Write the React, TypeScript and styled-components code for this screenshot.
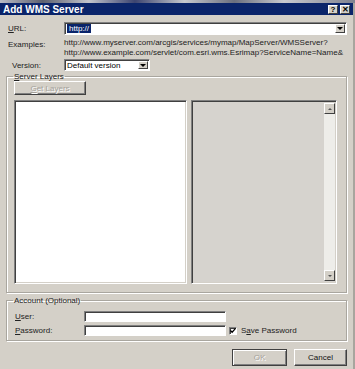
import styled, { createGlobalStyle } from 'styled-components';

const GlobalStyle = createGlobalStyle`
  html, body {
    margin: 0;
    padding: 0;
    background: #8a8e9c;
    font-family: "Liberation Sans", Arial, sans-serif;
  }
  * { box-sizing: border-box; }
`;

const Backdrop = styled.div`
  width: 355px;
  height: 3px;
  background: linear-gradient(90deg, #b9bcc6 0%, #5d6170 12%, #c3c5cc 25%, #3c4470 38%, #c7c9ce 52%, #6b6f7e 66%, #c9cacf 80%, #7f8290 100%);
`;

const Window = styled.div`
  width: 355px;
  height: 366px;
  background: #d4d0c8;
  display: flex;
  flex-direction: column;
  border-right: 2px solid #a8a59e;
`;

const TitleBar = styled.div`
  height: 12px;
  background: #0a246a;
  display: flex;
  align-items: center;
  padding: 0 3px 0 3px;
  color: #fff;
  font-weight: bold;
  font-size: 10px;
`;

const TitleText = styled.span`
  flex: 1;
`;

const TitleButton = styled.span`
  width: 10px;
  height: 9px;
  margin-left: 2px;
  background: #d4d0c8;
  border: 1px solid;
  border-color: #fff #404040 #404040 #fff;
  color: #000;
  font-size: 8px;
  line-height: 7px;
  text-align: center;
  font-weight: bold;
`;

const Body = styled.div`
  flex: 1;
  display: flex;
  flex-direction: column;
  padding: 7px 6px 0 6px;
  font-size: 8px;
  color: #000;
`;

const FormGrid = styled.div`
  display: grid;
  grid-template-columns: 56px 1fr;
  row-gap: 2px;
  align-items: center;
  padding-left: 2px;
`;

const Label = styled.span<{ $indent?: number; $top?: boolean }>`
  padding-left: ${(p) => p.$indent ?? 0}px;
  align-self: ${(p) => (p.$top ? 'start' : 'center')};
  padding-top: ${(p) => (p.$top ? 3 : 0)}px;
  color: #222;
  font-size: 8px;
`;

const Combo = styled.div<{ $width?: number; $height: number }>`
  width: ${(p) => (p.$width ? `${p.$width}px` : '100%')};
  height: ${(p) => p.$height}px;
  background: #fff;
  border: 1px solid;
  border-color: #808080 #fff #fff #808080;
  box-shadow: inset 1px 1px 0 #404040;
  display: flex;
  align-items: center;
  padding: 0 1px 0 2px;
`;

const ComboText = styled.span`
  flex: 1;
  font-size: 8px;
  white-space: nowrap;
`;

const Selected = styled.span`
  background: #0a246a;
  color: #fff;
  padding: 0 2px;
`;

const DropButton = styled.span`
  width: 10px;
  height: calc(100% - 2px);
  background: #d4d0c8;
  border: 1px solid;
  border-color: #fff #404040 #404040 #fff;
  display: flex;
  align-items: center;
  justify-content: center;
  &::after {
    content: '';
    border-left: 3px solid transparent;
    border-right: 3px solid transparent;
    border-top: 3px solid #000;
  }
`;

const Examples = styled.div`
  font-size: 8px;
  line-height: 9.5px;
  color: #222;
  white-space: nowrap;
  padding-top: 1px;
`;

const Group = styled.fieldset<{ $height: number }>`
  margin: 0;
  padding: 0 9px 0 7px;
  height: ${(p) => p.$height}px;
  border: 1px solid #a9a69f;
  box-shadow: 1px 1px 0 #fff, inset 1px 1px 0 #fff;
  min-width: 0;
`;

const Legend = styled.legend`
  padding: 0 1px;
  margin-left: -1px;
  font-size: 8px;
  color: #222;
  line-height: 9px;
`;

const U = styled.span`
  text-decoration: underline;
`;

const Button = styled.div<{ $width: number; $height: number; $disabled?: boolean; $default?: boolean }>`
  width: ${(p) => p.$width}px;
  height: ${(p) => p.$height}px;
  border: 1px solid;
  border-color: ${(p) => (p.$default ? '#404040' : '#fff #404040 #404040 #fff')};
  box-shadow: ${(p) => (p.$default ? 'inset 1px 1px 0 #fff, inset -1px -1px 0 #808080' : 'inset -1px -1px 0 #808080')};
  background: #d4d0c8;
  display: flex;
  align-items: center;
  justify-content: center;
  font-size: 8px;
  color: ${(p) => (p.$disabled ? '#a5a29b' : '#111')};
  text-shadow: ${(p) => (p.$disabled ? '1px 1px 0 #fff' : 'none')};
`;

const LayersInner = styled.div`
  display: flex;
  flex-direction: column;
  padding-top: 0px;
`;

const Lists = styled.div`
  display: flex;
  gap: 4px;
  margin-top: 5px;
  height: 184px;
`;

const Sunken = styled.div<{ $bg: string; $width: number }>`
  width: ${(p) => p.$width}px;
  height: 100%;
  background: ${(p) => p.$bg};
  border: 1px solid;
  border-color: #808080 #fff #fff #808080;
  box-shadow: inset 1px 1px 0 #404040, inset -1px -1px 0 #d4d0c8;
  display: flex;
  justify-content: flex-end;
  padding: 2px 1px 2px 2px;
`;

const ScrollBar = styled.div`
  width: 11px;
  height: 100%;
  background: #eeede9;
  display: flex;
  flex-direction: column;
  justify-content: space-between;
`;

const ScrollArrow = styled.span<{ $up?: boolean }>`
  width: 11px;
  height: 11px;
  background: #d4d0c8;
  border: 1px solid;
  border-color: #fff #404040 #404040 #fff;
  display: flex;
  align-items: center;
  justify-content: center;
  &::after {
    content: '';
    border-left: 2px solid transparent;
    border-right: 2px solid transparent;
    ${(p) => (p.$up ? 'border-bottom: 2px solid #555;' : 'border-top: 2px solid #555;')}
  }
`;

const AccountGrid = styled.div`
  display: grid;
  grid-template-columns: 69px 142px auto;
  row-gap: 3px;
  align-items: center;
  padding: 6px 0 0 1px;
`;

const TextBox = styled.div`
  height: 11px;
  background: #fff;
  border: 1px solid;
  border-color: #808080 #fff #fff #808080;
  box-shadow: inset 1px 1px 0 #404040;
`;

const CheckRow = styled.div`
  display: flex;
  align-items: center;
  gap: 4px;
  padding-left: 3px;
  font-size: 8px;
  color: #222;
`;

const CheckBox = styled.span`
  width: 8px;
  height: 8px;
  background: #fff;
  border: 1px solid;
  border-color: #808080 #fff #fff #808080;
  box-shadow: inset 1px 1px 0 #404040;
  display: flex;
  align-items: center;
  justify-content: center;
`;

const Footer = styled.div`
  display: flex;
  justify-content: flex-end;
  gap: 7px;
  margin-top: 8px;
`;

const Spacer = styled.div<{ $h: number }>`
  height: ${(p) => p.$h}px;
  flex-shrink: 0;
`;

export default function App() {
  return (
    <>
      <GlobalStyle />
      <Backdrop />
      <Window>
        <TitleBar>
          <TitleText>Add WMS Server</TitleText>
          <TitleButton>?</TitleButton>
          <TitleButton>✕</TitleButton>
        </TitleBar>
        <Body>
          <FormGrid>
            <Label>
              <U>U</U>RL:
            </Label>
            <Combo $height={13}>
              <ComboText>
                <Selected>http://</Selected>
              </ComboText>
              <DropButton />
            </Combo>
            <Label $top>Examples:</Label>
            <Examples>
              http://www.myserver.com/arcgis/services/mymap/MapServer/WMSServer?
              <br />
              http://www.example.com/servlet/com.esri.wms.Esrimap?ServiceName=Name&amp;
            </Examples>
            <Label $indent={4}>Version:</Label>
            <Combo $height={12} $width={86}>
              <ComboText>Default version</ComboText>
              <DropButton />
            </Combo>
          </FormGrid>
          <Spacer $h={1} />
          <Group $height={221}>
            <Legend>
              <U>S</U>erver Layers
            </Legend>
            <LayersInner>
              <Button $width={72} $height={14} $disabled>
                <span>
                  <U>G</U>et Layers
                </span>
              </Button>
              <Lists>
                <Sunken $bg="#fff" $width={173} />
                <Sunken $bg="#d6d3ce" $width={146}>
                  <ScrollBar>
                    <ScrollArrow $up />
                    <ScrollArrow />
                  </ScrollBar>
                </Sunken>
              </Lists>
            </LayersInner>
          </Group>
          <Spacer $h={3} />
          <Group $height={45}>
            <Legend>Account (Optional)</Legend>
            <AccountGrid>
              <Label>
                <U>U</U>ser:
              </Label>
              <TextBox />
              <span />
              <Label>
                <U>P</U>assword:
              </Label>
              <TextBox />
              <CheckRow>
                <CheckBox>
                  <svg width="7" height="7" viewBox="0 0 7 7">
                    <path d="M0.5 3.5 L2.5 5.5 L6.5 1" stroke="#000" strokeWidth="1.5" fill="none" />
                  </svg>
                </CheckBox>
                <span>
                  S<U>a</U>ve Password
                </span>
              </CheckRow>
            </AccountGrid>
          </Group>
          <Footer>
            <Button $width={55} $height={17} $disabled $default>
              OK
            </Button>
            <Button $width={53} $height={17}>
              Cancel
            </Button>
          </Footer>
        </Body>
      </Window>
    </>
  );
}
